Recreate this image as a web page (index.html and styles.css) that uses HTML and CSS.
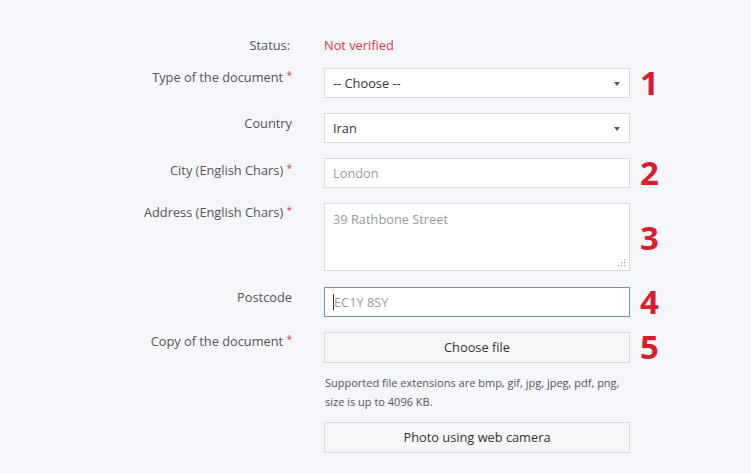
FILE: index.html
```html
<!DOCTYPE html>
<html lang="en">
<head>
<meta charset="utf-8">
<title>Document verification</title>
<link rel="stylesheet" href="styles.css">
</head>
<body>
<form class="form">
  <div class="row row-status">
    <div class="label">Status:</div>
    <div class="field"><span class="status">Not verified</span></div>
    <div class="num"></div>
  </div>
  <div class="row">
    <div class="label label-up">Type of the document <span class="req">*</span></div>
    <div class="field"><div class="control select">-- Choose --<span class="caret"></span></div></div>
    <div class="num">1</div>
  </div>
  <div class="row">
    <div class="label">Country</div>
    <div class="field"><div class="control select">Iran<span class="caret"></span></div></div>
    <div class="num"></div>
  </div>
  <div class="row">
    <div class="label">City (English Chars) <span class="req">*</span></div>
    <div class="field"><div class="control placeholder">London</div></div>
    <div class="num">2</div>
  </div>
  <div class="row row-area">
    <div class="label label-up">Address (English Chars) <span class="req">*</span></div>
    <div class="field"><div class="control textarea placeholder">39 Rathbone Street<svg class="grip" width="8" height="8" viewBox="0 0 8 8"><g fill="#9aa0a6"><rect x="6" y="0" width="1.3" height="1.3"/><rect x="3" y="3" width="1.3" height="1.3"/><rect x="6" y="3" width="1.3" height="1.3"/><rect x="0" y="6" width="1.3" height="1.3"/><rect x="3" y="6" width="1.3" height="1.3"/><rect x="6" y="6" width="1.3" height="1.3"/></g></svg></div></div>
    <div class="num num-mid">3</div>
  </div>
  <div class="row">
    <div class="label">Postcode</div>
    <div class="field"><div class="control focus placeholder"><span class="cursor"></span>EC1Y 8SY</div></div>
    <div class="num">4</div>
  </div>
  <div class="row row-file">
    <div class="label label-up">Copy of the document <span class="req">*</span></div>
    <div class="field">
      <div class="button">Choose file</div>
      <p class="help">Supported file extensions are bmp, gif, jpg, jpeg, pdf, png, size is up to 4096 KB.</p>
      <div class="button">Photo using web camera</div>
    </div>
    <div class="num">5</div>
  </div>
</form>
</body>
</html>
```
FILE: styles.css
```css
html, body {
  margin: 0;
  padding: 0;
}
body {
  background: #f4f6f9;
  font-family: "Open Sans", "Noto Sans", sans-serif;
  font-size: 12.8px;
  color: #555;
  width: 751px;
  height: 473px;
  overflow: hidden;
}
.form {
  padding-top: 36px;
}
.row {
  display: grid;
  grid-template-columns: 292px 338px 60px;
  margin-bottom: 15px;
}
.row-status {
  margin-bottom: 14px;
}
.row-area {
  margin-bottom: 16px;
}
.label {
  text-align: right;
  padding-top: 1px;
  line-height: 18px;
  color: #555;
  white-space: nowrap;
}
.label-up {
  padding-top: 0;
  margin-top: -2px;
}
.row-status .label {
  padding-top: 0;
  padding-right: 2px;
}
.field {
  margin-left: 32px;
}
.status {
  color: #d9383f;
  line-height: 18px;
}
.req {
  color: #d9383f;
  font-size: 10px;
  vertical-align: 3px;
}
.control {
  position: relative;
  box-sizing: border-box;
  height: 30px;
  background: #fff;
  border: 1px solid #d6dadf;
  padding: 0 8px;
  line-height: 28px;
  color: #333;
}
.select .caret {
  position: absolute;
  right: 9px;
  top: 13px;
  width: 0;
  height: 0;
  border-left: 3px solid transparent;
  border-right: 3px solid transparent;
  border-top: 4px solid #4f5a66;
}
.placeholder {
  color: #9a9a9a;
}
.textarea {
  height: 68px;
  line-height: 18px;
  padding-top: 6px;
}
.grip {
  position: absolute;
  right: 3px;
  bottom: 3px;
}
.focus {
  border-color: #6c97a3;
}
.cursor {
  display: inline-block;
  width: 1px;
  height: 16px;
  background: #333;
  vertical-align: -3px;
}
.button {
  box-sizing: border-box;
  height: 31px;
  line-height: 29px;
  text-align: center;
  background: #f6f6f6;
  border: 1px solid #d6d8db;
  color: #333;
}
.help {
  margin: 10px 0 11px 1px;
  font-size: 11px;
  line-height: 19px;
  color: #555;
}
.num {
  padding-left: 10px;
  font-size: 33px;
  font-weight: 700;
  color: #d51f2f;
  line-height: 30px;
}
.num-mid {
  padding-top: 20px;
}
```
